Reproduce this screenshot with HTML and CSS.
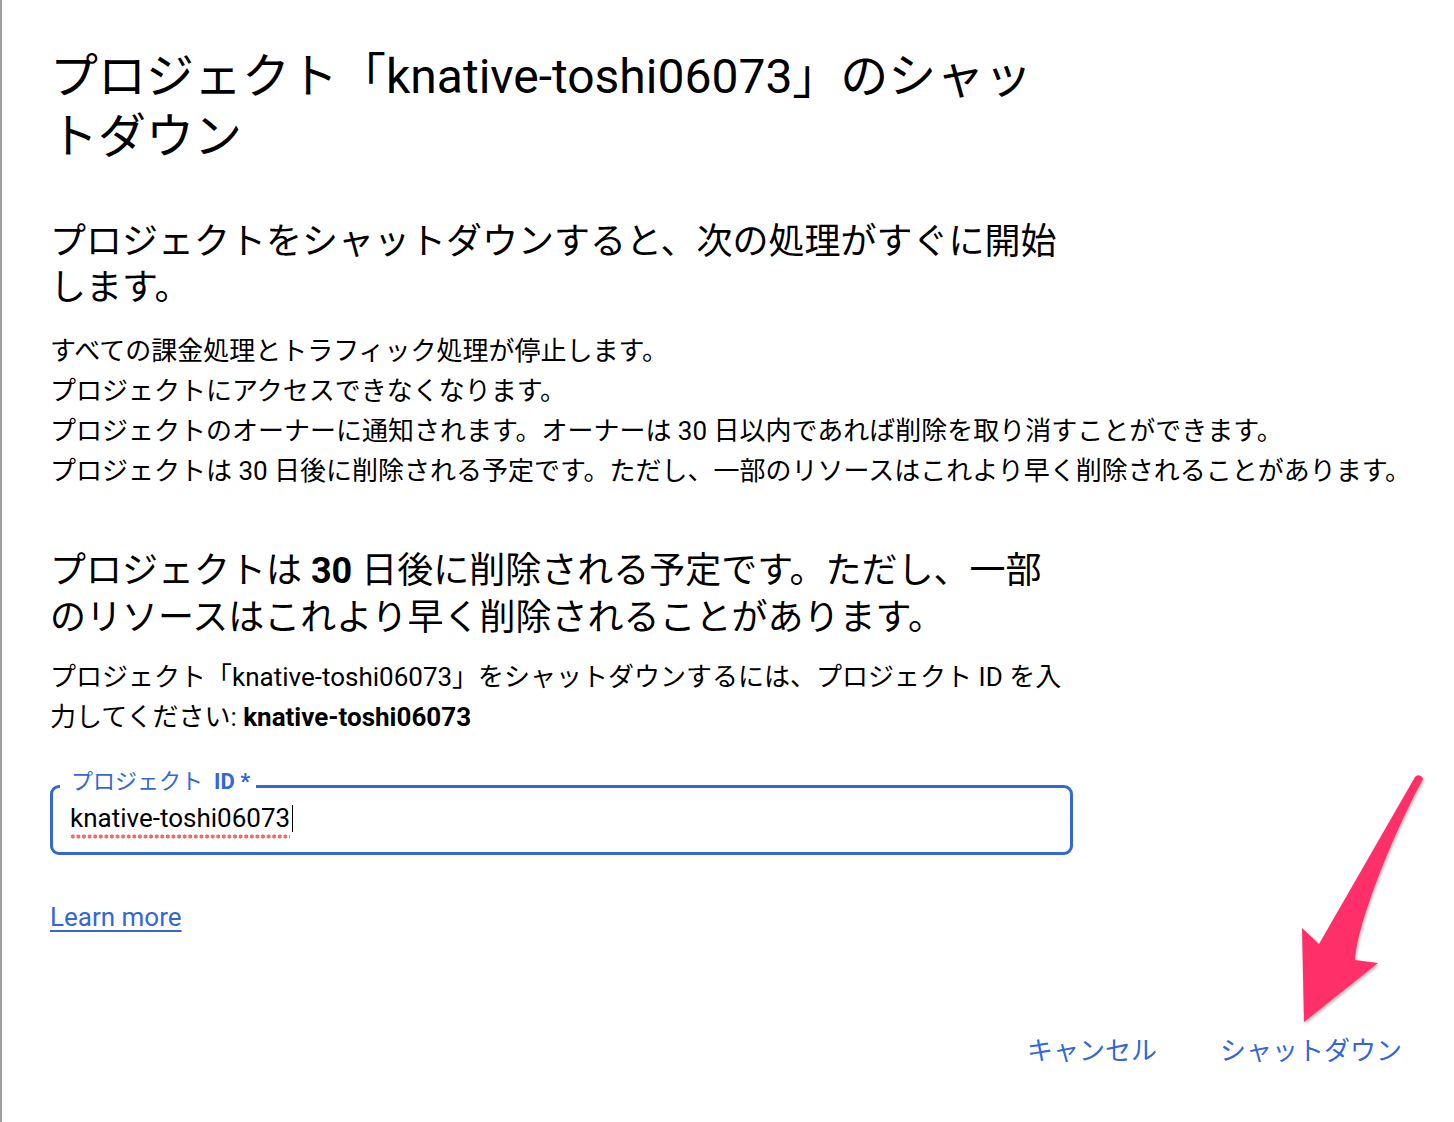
FILE: index.html
```html
<!DOCTYPE html>
<html lang="ja">
<head>
<meta charset="utf-8">
<title>プロジェクトのシャットダウン</title>
<link rel="stylesheet" href="styles.css">
</head>
<body>
<div class="page">
  <div class="dialog">
    <h1 class="title">プロジェクト「knative-toshi06073」のシャットダウン</h1>
    <h2 class="section first">プロジェクトをシャットダウンすると、次の処理がすぐに開始します。</h2>
    <ul class="effects">
      <li>すべての課金処理とトラフィック処理が停止します。</li>
      <li>プロジェクトにアクセスできなくなります。</li>
      <li>プロジェクトのオーナーに通知されます。オーナーは 30 日以内であれば削除を取り消すことができます。</li>
      <li>プロジェクトは 30 日後に削除される予定です。ただし、一部のリソースはこれより早く削除されることがあります。</li>
    </ul>
    <h2 class="section second">プロジェクトは <b>30</b> 日後に削除される予定です。ただし、一部のリソースはこれより早く削除されることがあります。</h2>
    <p class="desc">プロジェクト「knative-toshi06073」をシャットダウンするには、プロジェクト ID を入力してください: <b>knative-toshi06073</b></p>
    <div class="field">
      <span class="field-label">プロジェクト<span class="id">ID *</span></span>
      <div class="field-input"><span class="typed">knative-toshi06073</span><span class="caret"></span></div>
    </div>
    <div class="learn-row"><a class="learn" href="#">Learn more</a></div>
    <div class="actions">
      <button class="btn">キャンセル</button>
      <button class="btn">シャットダウン</button>
    </div>
  </div>
  <svg class="arrow" width="1454" height="1122" viewBox="0 0 1454 1122" xmlns="http://www.w3.org/2000/svg">
    <path d="M1415 777 L1319 944 L1302 928 L1304 1022 L1378 963 L1355 960 C1358 920 1395 830 1423 779 A4.5 4.5 0 0 0 1415 777 Z" fill="#ff3069"/>
  </svg>
</div>
</body>
</html>
```
FILE: styles.css
```css
html, body {
  margin: 0;
  padding: 0;
  background: #fff;
}

.page {
  position: relative;
  width: 1454px;
  height: 1122px;
  overflow: hidden;
  font-family: Roboto, "Noto Sans CJK JP", sans-serif;
  color: #000;
}

.dialog {
  box-sizing: border-box;
  height: 1122px;
  border-left: 2px solid #9e9e9e;
  padding: 0 52px 0 48px;
  display: flex;
  flex-direction: column;
  align-items: stretch;
}

.title {
  margin: 47px 0 0;
  max-width: 1016px;
  font-size: 48px;
  line-height: 60px;
  font-weight: 400;
}

.section {
  margin: 0;
  max-width: 1016px;
  font-size: 36px;
  line-height: 46px;
  font-weight: 400;
}

.section b {
  font-weight: 700;
}

.section.first {
  margin-top: 52px;
}

.section.second {
  margin-top: 57px;
  line-height: 47px;
}

.effects {
  list-style: none;
  margin: 20px 0 0;
  padding: 0;
  font-size: 26px;
  line-height: 40px;
  white-space: nowrap;
}

.desc {
  margin: 15px 0 0;
  max-width: 1016px;
  font-size: 26px;
  line-height: 40px;
}

.desc b {
  font-weight: 700;
}

.field {
  position: relative;
  margin-top: 48px;
  width: 1023px;
  height: 70px;
  box-sizing: border-box;
  border: 3px solid #3367d6;
  border-radius: 9px;
}

.field-label {
  position: absolute;
  left: 7px;
  top: -19px;
  padding: 0 6px 0 11px;
  background: #fff;
  color: #3367d6;
  font-size: 22px;
  line-height: 26px;
  white-space: nowrap;
}

.field-label .id {
  font-weight: 700;
  margin-left: 11px;
}

.field-input {
  padding-left: 17px;
  font-size: 26px;
  line-height: 60px;
  display: flex;
  align-items: center;
}

.typed {
  position: relative;
}

.typed::after {
  content: "";
  position: absolute;
  left: 0;
  right: 0;
  bottom: 9px;
  height: 5px;
  background-image: radial-gradient(circle, #f26a6a 1.8px, transparent 2.3px);
  background-size: 5.6px 5px;
  background-repeat: repeat-x;
}

.caret {
  display: inline-block;
  width: 0;
  height: 27px;
  border-left: 1.5px solid #000;
  margin-left: 2px;
}

.learn-row {
  margin-top: 42px;
  font-size: 26px;
  line-height: 40px;
}

.learn {
  color: #3367d6;
  text-decoration: underline;
  text-decoration-thickness: 2px;
  text-underline-offset: 4px;
}

.actions {
  margin-top: 94px;
  display: flex;
  justify-content: flex-end;
  gap: 63px;
}

.btn {
  border: 0;
  padding: 0;
  margin: 0;
  background: none;
  color: #3367d6;
  font-family: inherit;
  font-size: 26px;
  line-height: 40px;
  cursor: pointer;
}

.arrow {
  position: absolute;
  left: 0;
  top: 0;
  pointer-events: none;
  filter: drop-shadow(1px 2px 1.5px rgba(0, 0, 0, 0.3));
}
```
